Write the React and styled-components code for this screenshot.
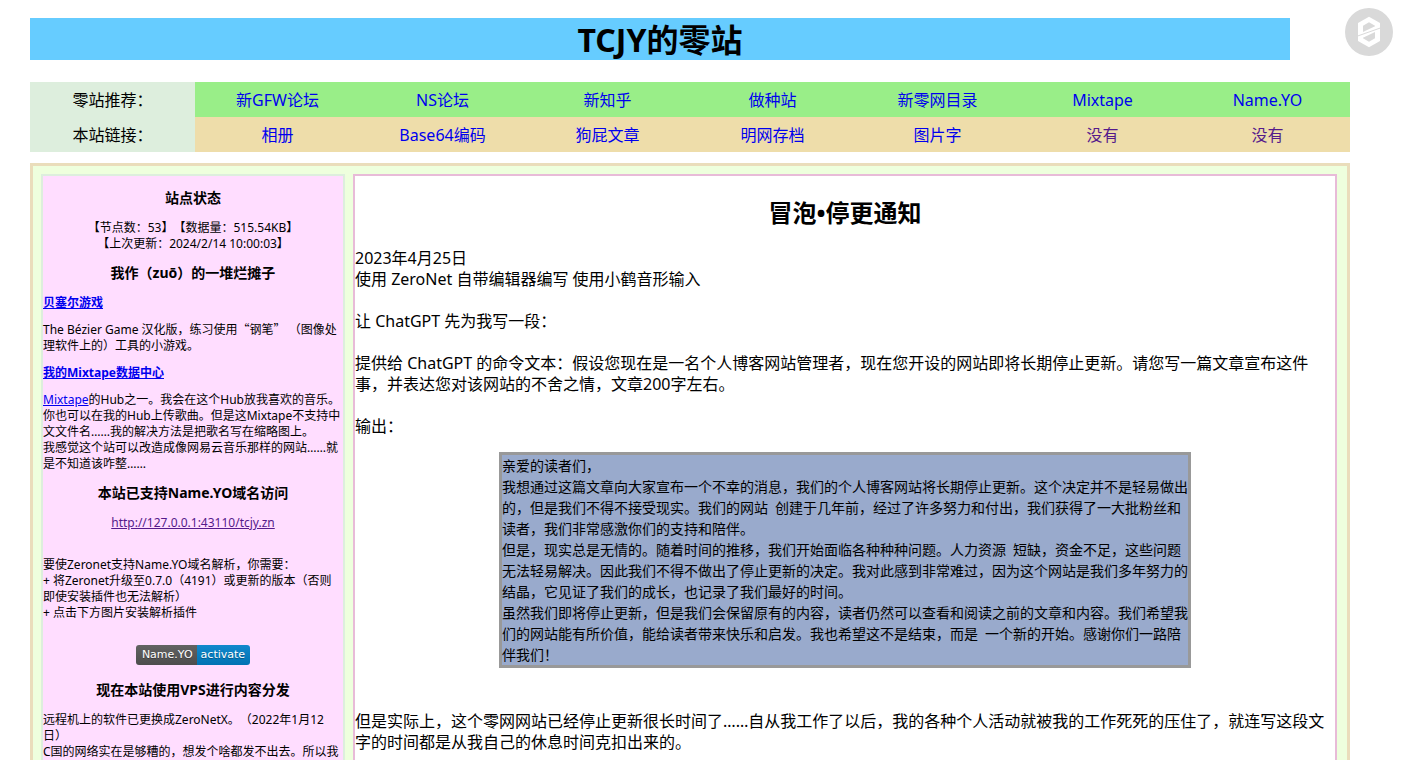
import styled, { createGlobalStyle } from "styled-components";

const GlobalStyle = createGlobalStyle`
  html {
    scrollbar-width: none;
  }

  body {
    margin: 0;
    background: #ffffff;
    color: #000000;
    font-family: "Noto Sans", "Noto Sans CJK SC", sans-serif;
    font-size: 16px;
    line-height: 21px;
    text-spacing-trim: space-all;
  }
`;

const navRows = [
  {
    label: "零站推荐：",
    color: "#99ee88",
    links: [
      { text: "新GFW论坛" },
      { text: "NS论坛" },
      { text: "新知乎" },
      { text: "做种站" },
      { text: "新零网目录" },
      { text: "Mixtape" },
      { text: "Name.YO" },
    ],
  },
  {
    label: "本站链接：",
    color: "#eeddaa",
    links: [
      { text: "相册" },
      { text: "Base64编码" },
      { text: "狗屁文章" },
      { text: "明网存档" },
      { text: "图片字" },
      { text: "没有", visited: true },
      { text: "没有", visited: true },
    ],
  },
];

const letter = [
  "亲爱的读者们，",
  "我想通过这篇文章向大家宣布一个不幸的消息，我们的个人博客网站将长期停止更新。这个决定并不是轻易做出的，但是我们不得不接受现实。我们的网站 创建于几年前，经过了许多努力和付出，我们获得了一大批粉丝和读者，我们非常感激你们的支持和陪伴。",
  "但是，现实总是无情的。随着时间的推移，我们开始面临各种种种问题。人力资源 短缺，资金不足，这些问题无法轻易解决。因此我们不得不做出了停止更新的决定。我对此感到非常难过，因为这个网站是我们多年努力的结晶，它见证了我们的成长，也记录了我们最好的时间。",
  "虽然我们即将停止更新，但是我们会保留原有的内容，读者仍然可以查看和阅读之前的文章和内容。我们希望我们的网站能有所价值，能给读者带来快乐和启发。我也希望这不是结束，而是 一个新的开始。感谢你们一路陪伴我们！",
];

const ZeroLogo = () => (
  <svg width="48" height="48" viewBox="0 0 144 144" aria-hidden="true">
    <circle cx="72" cy="72" r="72" fill="#d9d9d9" />
    <path fill="#ffffff" d="M72 26L105 45V99L72 118L39 99V45Z" />
    <path fill="#d9d9d9" d="M54 53L72 43L90 53V55L54 72Z" />
    <path fill="#d9d9d9" d="M90 91L72 101L54 91V89L90 72Z" />
    <path stroke="#d9d9d9" strokeWidth="3" d="M38 84L106 60" />
  </svg>
);

const App = () => {
  return (
    <>
      <GlobalStyle />
      <Page>
        <Title>TCJY的零站</Title>
        <Nav>
          {navRows.map((row) => (
            <NavRow key={row.label}>
              <NavLabel>{row.label}</NavLabel>
              {row.links.map((link, i) => (
                <NavCell key={i} $color={row.color}>
                  <NavLink href="#" $visited={link.visited}>
                    {link.text}
                  </NavLink>
                </NavCell>
              ))}
            </NavRow>
          ))}
        </Nav>

        <Panel>
          <Sidebar>
            <SideTitle>站点状态</SideTitle>
            <SideText $center>
              【节点数：53】【数据量：515.54KB】
              <br />
              【上次更新：2024/2/14 10:00:03】
            </SideText>

            <SideTitle>我作（zuō）的一堆烂摊子</SideTitle>
            <SideSubtitle>
              <Link href="#">贝塞尔游戏</Link>
            </SideSubtitle>
            <SideText>
              The Bézier Game 汉化版，练习使用<Quoted>“钢笔”</Quoted> （图像处理软件上的）工具的小游戏。
            </SideText>
            <SideSubtitle>
              <Link href="#">我的Mixtape数据中心</Link>
            </SideSubtitle>
            <SideText>
              <Link href="#">Mixtape</Link>
              的Hub之一。我会在这个Hub放我喜欢的音乐。你也可以在我的Hub上传歌曲。但是这Mixtape不支持中文文件名……我的解决方法是把歌名写在缩略图上。
              <br />
              我感觉这个站可以改造成像网易云音乐那样的网站……就是不知道该咋整……
            </SideText>

            <SideTitle>本站已支持Name.YO域名访问</SideTitle>
            <SideText $center>
              <Link href="#" $visited>
                http://127.0.0.1:43110/tcjy.zn
              </Link>
            </SideText>
            <Steps>
              要使Zeronet支持Name.YO域名解析，你需要：
              <br />
              + 将Zeronet升级至0.7.0（4191）或更新的版本（否则即使安装插件也无法解析）
              <br />+ 点击下方图片安装解析插件
            </Steps>
            <BadgeRow>
              <Badge href="#">
                <BadgeName>Name.YO</BadgeName>
                <BadgeAction>activate</BadgeAction>
              </Badge>
            </BadgeRow>

            <SideTitle>现在本站使用VPS进行内容分发</SideTitle>
            <SideText>
              远程机上的软件已更换成ZeroNetX。（2022年1月12日）
              <br />
              C国的网络实在是够糟的，想发个啥都发不出去。所以我
            </SideText>
          </Sidebar>

          <Article>
            <ArticleTitle>冒泡•停更通知</ArticleTitle>
            <Paragraph>
              2023年4月25日
              <br />
              使用 ZeroNet 自带编辑器编写 使用小鹤音形输入
            </Paragraph>
            <Paragraph>让 ChatGPT 先为我写一段：</Paragraph>
            <Paragraph>
              提供给 ChatGPT 的命令文本：假设您现在是一名个人博客网站管理者，现在您开设的网站即将长期停止更新。请您写一篇文章宣布这件事，并表达您对该网站的不舍之情，文章200字左右。
            </Paragraph>
            <Paragraph>输出：</Paragraph>
            <Letter>
              {letter.map((text) => (
                <LetterLine key={text}>{text}</LetterLine>
              ))}
            </Letter>
            <Paragraph>
              但是实际上，这个零网网站已经停止更新很长时间了……自从我工作了以后，我的各种个人活动就被我的工作死死的压住了，就连写这段文字的时间都是从我自己的休息时间克扣出来的。
            </Paragraph>
          </Article>
        </Panel>
      </Page>
      <LogoButton aria-label="ZeroNet">
        <ZeroLogo />
      </LogoButton>
    </>
  );
};

const Page = styled.div`
  padding: 18px 51px 0 30px;
`;

const Title = styled.h1`
  margin: 0 60px 22px 0;
  padding-top: 2px;
  background: #66ccff;
  font-size: 32px;
  line-height: 40px;
  text-align: center;
`;

const Nav = styled.nav`
  margin-bottom: 11px;
`;

const NavRow = styled.div`
  display: grid;
  grid-template-columns: repeat(8, 1fr);
  line-height: 33px;
  text-align: center;
`;

const NavLabel = styled.div`
  padding-top: 2px;
  background: #ddeedd;
`;

const NavCell = styled.div`
  padding-top: 2px;
  background: ${(props) => props.$color};
`;

const Link = styled.a`
  color: ${(props) => (props.$visited ? "#551a8b" : "#0000ee")};
`;

const NavLink = styled(Link)`
  text-decoration: none;
`;

const Panel = styled.div`
  display: grid;
  grid-template-columns: 304px 1fr;
  gap: 8px;
  padding: 8px 10px 8px 8px;
  border: 3px solid #eaddbb;
  background: #eeffdd;
`;

const Sidebar = styled.aside`
  padding-top: 1px;
  border: 2px solid #ddeedd;
  background: #ffddff;
  font-size: 12px;
  line-height: 16px;
`;

const SideTitle = styled.h3`
  margin: 11px 0 13px;
  font-size: 14px;
  line-height: 19px;
  text-align: center;
`;

const SideSubtitle = styled.h4`
  margin: 11px 0;
  font-size: 12px;
`;

const SideText = styled.p`
  margin: 11px 0;
  text-align: ${(props) => (props.$center ? "center" : "left")};
`;

/* full-width quotation marks */
const Quoted = styled.span`
  font-family: "Noto Sans CJK SC", sans-serif;
  line-height: 1;
`;

const Steps = styled(SideText)`
  margin: 26px 0 24px;
`;

const BadgeRow = styled.div`
  display: flex;
  justify-content: center;
  margin-bottom: 15px;
`;

const Badge = styled.a`
  display: flex;
  overflow: hidden;
  border-radius: 3px;
  color: #ffffff;
  font-family: "DejaVu Sans", sans-serif;
  font-size: 11px;
  line-height: 20px;
  text-decoration: none;
  text-shadow: 0 1px 0 rgba(1, 1, 1, 0.3);
`;

const BadgeName = styled.span`
  padding: 0 4px 0 6px;
  background: linear-gradient(#626262, #4d4d4d);
`;

const BadgeAction = styled.span`
  padding: 0 5px 0 4px;
  background: linear-gradient(#1288cc, #0072b3);
`;

const Article = styled.article`
  border: 2px solid #e8bbd8;
  background: #ffffff;
`;

const ArticleTitle = styled.h2`
  margin: 21px 0 19px;
  font-size: 24px;
  line-height: 32px;
  text-align: center;
`;

const Paragraph = styled.p`
  margin: 0;

  & + & {
    margin-top: 21px;
  }
`;

const Letter = styled.blockquote`
  width: 70%;
  margin: 15px auto 43px;
  border: 3px solid #999999;
  background: #99aacc;
  font-family: "Noto Sans Mono CJK SC", "DejaVu Sans Mono", "Noto Sans CJK SC", monospace;
  font-size: 14px;
`;

const LetterLine = styled.p`
  margin: 0;
`;

const LogoButton = styled.button`
  position: fixed;
  top: 8px;
  right: 8px;
  display: flex;
  padding: 0;
  border: none;
  border-radius: 50%;
  background: none;
  cursor: pointer;
`;

export default App;
